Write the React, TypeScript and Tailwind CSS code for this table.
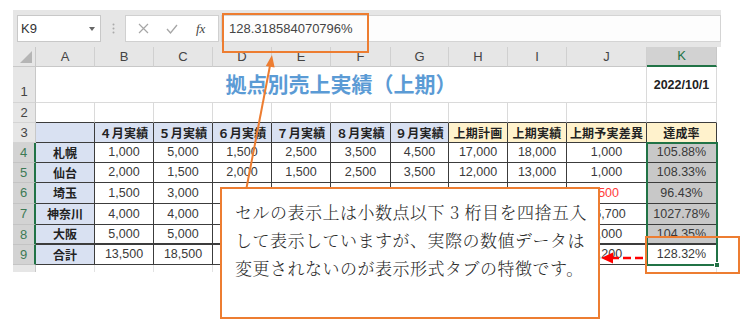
import React from 'react';
import clsx from 'clsx';

const sans = "font-['Liberation_Sans','Noto_Sans_CJK_JP',sans-serif]";

const W = ['w-[59px]', 'w-[59px]', 'w-[59px]', 'w-[59px]', 'w-[59px]', 'w-[60px]', 'w-[58px]', 'w-[59px]', 'w-[59px]', 'w-[80px]', 'w-[70px]'];
const LETTERS = ['A', 'B', 'C', 'D', 'E', 'F', 'G', 'H', 'I', 'J', 'K'];
const HEADS = ['', '４月実績', '５月実績', '６月実績', '７月実績', '８月実績', '９月実績', '上期計画', '上期実績', '上期予実差異', '達成率'];

// D6:I9 sit under the callout, so they are left blank
const BODY = [
  ['札幌', '1,000', '5,000', '1,500', '2,500', '3,500', '4,500', '17,000', '18,000', '1,000', '105.88%'],
  ['仙台', '2,000', '1,500', '2,000', '1,500', '2,500', '3,500', '12,000', '13,000', '1,000', '108.33%'],
  ['埼玉', '1,500', '3,000', '', '', '', '', '', '', '-500', '96.43%'],
  ['神奈川', '4,000', '4,000', '', '', '', '', '', '', '16,700', '1027.78%'],
  ['大阪', '5,000', '5,000', '', '', '', '', '', '', '1,000', '104.35%'],
  ['合計', '13,500', '18,500', '', '', '', '', '', '', '3,200', '128.32%'],
];
const BODY_H = ['h-[20px]', 'h-[20px]', 'h-[21px]', 'h-[21px]', 'h-[20px]', 'h-[20px]'];

// row number cell on the left edge
const RowHead = ({ n, className }: { n?: number; className?: string }) => (
  <div className={clsx('w-[23px] shrink-0 flex justify-center text-[13px]', className)}>{n}</div>
);

function FormulaBar() {
  return (
    <div className="h-[37px] bg-[#e6e6e6] flex items-center w-[708px]">
      <div className="ml-[4px] w-[84px] h-[27px] bg-white border border-[#c8c8c8] flex items-center justify-between pl-[3px] pr-[5px]">
        <span className="text-[13px] text-[#333]">K9</span>
        <svg width="6" height="4" viewBox="0 0 6 4"><path d="M0 0h6L3 4z" fill="#666" /></svg>
      </div>
      <div className="w-[24px] flex justify-center">
        <svg width="3" height="11" viewBox="0 0 3 11">
          <circle cx="1.5" cy="1.5" r="1" fill="#aaa" />
          <circle cx="1.5" cy="5.5" r="1" fill="#aaa" />
          <circle cx="1.5" cy="9.5" r="1" fill="#aaa" />
        </svg>
      </div>
      <div className="w-[94px] h-[27px] bg-white border border-[#d0d0d0] flex items-center">
        <svg className="ml-[12px]" width="11" height="11" viewBox="0 0 11 11">
          <path d="M1 1l9 9M10 1l-9 9" stroke="#a6a6a6" strokeWidth="1.2" />
        </svg>
        <svg className="ml-[17px]" width="12" height="10" viewBox="0 0 12 10">
          <path d="M1 5l3.5 4L11 1" stroke="#a6a6a6" strokeWidth="1.3" fill="none" />
        </svg>
        <span className="ml-[18px] text-[13px] italic text-[#444] font-['Liberation_Serif',serif]">fx</span>
      </div>
      <div className="ml-[2px] flex-1 h-[27px] bg-[#fdfdfd] border border-[#d4d4d4] flex items-center pl-[7px]">
        <span className="text-[13px] text-[#444]">128.318584070796%</span>
      </div>
    </div>
  );
}

function ColumnHeader() {
  return (
    <div className="flex h-[20px]">
      <div className="w-[23px] bg-[#e6e6e6] border-r border-b border-[#c8c8c8] flex items-end justify-end p-[3px]">
        <svg width="12" height="12" viewBox="0 0 12 12"><path d="M12 0v12H0z" fill="#b5b5b5" /></svg>
      </div>
      {LETTERS.map((l, i) => (
        <div
          key={l}
          className={clsx(
            W[i],
            'flex items-center justify-center text-[13px] border-r',
            i === 10
              ? 'bg-[#d2d2d2] text-[#217346] border-r-[#c8c8c8] border-b-2 border-b-[#217346]'
              : 'bg-[#e6e6e6] text-[#444] border-r-[#d0d0d0] border-b border-b-[#c8c8c8]'
          )}
        >
          {l}
        </div>
      ))}
    </div>
  );
}

export default function App() {
  return (
    <div className={clsx('relative w-[745px] h-[327px] bg-white overflow-hidden pl-[13px] pt-[10px]', sans)}>
      <FormulaBar />
      <ColumnHeader />

      {/* Row 1: title merged across A:J */}
      <div className="flex h-[36px]">
        <RowHead n={1} className="items-end pb-[1px] bg-[#e6e6e6] text-[#444] border-r border-b border-r-[#c8c8c8] border-b-[#d4d4d4]" />
        <div className="w-[611px] flex items-end justify-center pb-[8px] border-r border-b border-[#dadada]">
          <span className="text-[21px] font-semibold text-[#5b9bd5] font-['Noto_Sans_CJK_JP',sans-serif] leading-none">拠点別売上実績（上期）</span>
        </div>
        <div className="w-[70px] flex items-end justify-center pb-[11px] border-r border-b border-[#dadada]">
          <span className="text-[12.5px] font-bold text-[#222] leading-none">2022/10/1</span>
        </div>
      </div>

      {/* Row 2 */}
      <div className="flex h-[20px]">
        <RowHead n={2} className="items-center bg-[#e6e6e6] text-[#444] border-r border-b border-r-[#c8c8c8] border-b-[#d4d4d4]" />
        {W.map((w, i) => (
          <div key={i} className={clsx(w, 'border-r border-r-[#dadada] border-b border-b-[#3c3c3c]')} />
        ))}
      </div>

      {/* Row 3: headings */}
      <div className="flex h-[20px]">
        <RowHead n={3} className="items-center bg-[#e6e6e6] text-[#444] border-r border-b border-r-[#c8c8c8] border-b-[#d4d4d4]" />
        {HEADS.map((t, i) => (
          <div
            key={i}
            className={clsx(
              W[i],
              'flex items-center justify-center border-r border-b border-[#3c3c3c] text-[12px] font-bold text-[#222] tracking-[0.2px] font-["Noto_Sans_CJK_JP",sans-serif]',
              i < 7 ? 'bg-[#d9e1f2]' : 'bg-[#fff2cc]'
            )}
          >
            {t}
          </div>
        ))}
      </div>

      {/* Rows 4-9: data */}
      {BODY.map((row, r) => (
        <div key={r} className={clsx('flex', BODY_H[r])}>
          <RowHead
            n={r + 4}
            className="items-center bg-[#d3d3d3] text-[#3d7a55] border-r-2 border-r-[#217346] border-b border-b-[#c4c4c4]"
          />
          {row.map((v, c) => (
            <div
              key={c}
              className={clsx(
                W[c],
                'flex items-center justify-center border-r border-[#3c3c3c]',
                r === 4 ? 'border-b-2' : 'border-b',
                c === 0
                  ? 'bg-[#d9e1f2] font-bold text-[12px] text-[#222] font-["Noto_Sans_CJK_JP",sans-serif]'
                  : 'text-[12.5px] text-[#3a3a3a]',
                c === 10 && r < 5 && 'bg-[#c8c8c8]',
                r === 2 && c === 9 && 'text-[#ff3b3b]'
              )}
            >
              {v}
            </div>
          ))}
        </div>
      ))}

      {/* cut-off row 10 */}
      <div className="flex h-[7px]">
        <RowHead className="bg-[#e6e6e6] border-r border-[#c8c8c8]" />
        {W.map((w, i) => (
          <div key={i} className={clsx(w, 'border-r border-[#e2e2e2]')} />
        ))}
      </div>

      {/* selection K4:K9 */}
      <div className="absolute left-[646px] top-[142px] w-[72px] h-[124px] border-2 border-[#217346]" />
      <div className="absolute left-[714px] top-[262px] w-[6px] h-[6px] bg-[#217346] border border-white" />

      {/* orange callout boxes */}
      <div className="absolute left-[222px] top-[13px] w-[147px] h-[40px] border-2 border-[#ed7d31]" />
      <div className="absolute left-[645px] top-[236px] w-[95px] h-[38px] border-2 border-[#ed7d31]" />

      <svg className="absolute left-0 top-0 pointer-events-none" width="745" height="327" viewBox="0 0 745 327">
        <line x1="246.5" y1="188" x2="270.3" y2="64" stroke="#ed7d31" strokeWidth="2" />
        <polygon points="272,55 274.6,67.6 265.8,66" fill="#ed7d31" />
        <line x1="643" y1="258" x2="611" y2="258" stroke="#ff0000" strokeWidth="2.5" strokeDasharray="8 4" />
        <polygon points="601,258 613,252.5 613,263.5" fill="#ff0000" />
      </svg>

      <div className="absolute left-[220px] top-[187px] w-[380px] h-[132px] bg-white border-2 border-[#ed7d31] pl-[13px] pt-[9px]">
        <div className="text-[17px] leading-[28px] tracking-[0.5px] font-light text-[#2a2a2a] whitespace-nowrap font-['Noto_Serif_CJK_JP','Noto_Sans_CJK_JP',serif]">
          <div>セルの表示上は小数点以下 3 桁目を四捨五入</div>
          <div>して表示していますが、実際の数値データは</div>
          <div>変更されないのが表示形式タブの特徴です。</div>
        </div>
      </div>
    </div>
  );
}
